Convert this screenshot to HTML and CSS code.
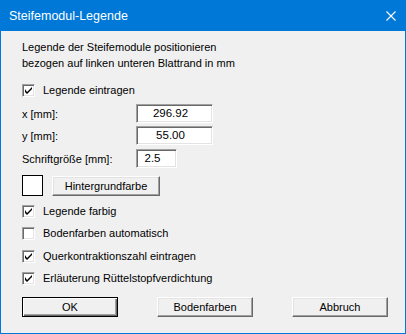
FILE: index.html
```html
<!DOCTYPE html>
<html lang="de">
<head>
<meta charset="utf-8">
<title>Steifemodul-Legende</title>
<link rel="stylesheet" href="styles.css">
</head>
<body>
<div class="dialog">
  <div class="titlebar">
    <span class="title">Steifemodul-Legende</span>
    <svg class="close" width="10" height="10" viewBox="0 0 10 10"><path d="M0.5 0.5 L9.5 9.5 M9.5 0.5 L0.5 9.5" stroke="#fff" stroke-width="1.1" fill="none"/></svg>
  </div>
  <div class="content">
    <div class="intro">
      <div class="line">Legende der Steifemodule positionieren</div>
      <div class="line">bezogen auf linken unteren Blattrand in mm</div>
    </div>
    <label class="check r-eintragen"><span class="box checked"><svg width="7" height="7" viewBox="0 0 7 7"><path d="M0 2 L0 5 L2 7 L7 2 L7 0 L2 5 Z" fill="#000"/></svg></span><span>Legende eintragen</span></label>
    <div class="field r-x"><span class="flabel">x [mm]:</span><span class="input wide">296.92</span></div>
    <div class="field r-y"><span class="flabel">y [mm]:</span><span class="input wide">55.00</span></div>
    <div class="field r-s"><span class="flabel">Schriftgröße [mm]:</span><span class="input narrow">2.5</span></div>
    <div class="swatchrow"><span class="swatch"></span><span class="btn hg">Hintergrundfarbe</span></div>
    <label class="check r-c1"><span class="box checked"><svg width="7" height="7" viewBox="0 0 7 7"><path d="M0 2 L0 5 L2 7 L7 2 L7 0 L2 5 Z" fill="#000"/></svg></span><span>Legende farbig</span></label>
    <label class="check r-c2"><span class="box"></span><span>Bodenfarben automatisch</span></label>
    <label class="check r-c3"><span class="box checked"><svg width="7" height="7" viewBox="0 0 7 7"><path d="M0 2 L0 5 L2 7 L7 2 L7 0 L2 5 Z" fill="#000"/></svg></span><span>Querkontraktionszahl eintragen</span></label>
    <label class="check r-c4"><span class="box checked"><svg width="7" height="7" viewBox="0 0 7 7"><path d="M0 2 L0 5 L2 7 L7 2 L7 0 L2 5 Z" fill="#000"/></svg></span><span>Erläuterung Rüttelstopfverdichtung</span></label>
    <div class="buttons">
      <span class="btn default">OK</span>
      <span class="btn">Bodenfarben</span>
      <span class="btn">Abbruch</span>
    </div>
  </div>
</div>
</body>
</html>
```
FILE: styles.css
```css
html, body {
  margin: 0;
  padding: 0;
  background: #f0f0f0;
}
.dialog {
  width: 406px;
  height: 334px;
  box-sizing: border-box;
  border: 1px solid #0078d7;
  border-top: none;
  background: #f0f0f0;
  font-family: "Liberation Sans", Arial, sans-serif;
  font-size: 11px;
  color: #000;
  display: flex;
  flex-direction: column;
}
.titlebar {
  height: 31px;
  background: #0078d7;
  margin: 0 -1px;
  display: flex;
  align-items: center;
  justify-content: space-between;
  padding: 0 10px 0 9px;
}
.title {
  color: #fff;
  font-family: "Liberation Sans", Arial, sans-serif;
  font-size: 12.5px;
  margin-top: 1px;
}
.close {
  display: block;
  margin-top: 0;
}
.content {
  padding: 8px 17px 0 21px;
  display: flex;
  flex-direction: column;
}
.line {
  height: 16px;
  line-height: 16px;
}
.check {
  display: flex;
  align-items: center;
  height: 16px;
  gap: 8px;
}
.box {
  width: 13px;
  height: 13px;
  box-sizing: border-box;
  background: #fff;
  border-top: 1px solid #a0a0a0;
  border-left: 1px solid #a0a0a0;
  border-right: 1px solid #fff;
  border-bottom: 1px solid #fff;
  box-shadow: inset 1px 1px 0 #696969, inset -1px -1px 0 #e3e3e3;
  display: flex;
  align-items: center;
  justify-content: center;
  flex: none;
}
.box svg {
  display: block;
}
.r-eintragen { margin-top: 11px; }
.field {
  display: flex;
  align-items: center;
  height: 19px;
}
.r-x { margin-top: 6px; }
.r-y { margin-top: 3px; }
.r-s { margin-top: 4px; }
.flabel {
  width: 114px;
  flex: none;
}
.input {
  height: 19px;
  box-sizing: border-box;
  background: #fff;
  border-top: 1px solid #a0a0a0;
  border-left: 1px solid #a0a0a0;
  border-right: 1px solid #fff;
  border-bottom: 1px solid #fff;
  box-shadow: inset 1px 1px 0 #696969, inset -1px -1px 0 #e3e3e3;
  line-height: 17px;
  text-align: center;
  padding-right: 8px;
  font-size: 11.5px;
}
.wide { width: 77px; }
.narrow { width: 41px; }
.swatchrow {
  display: flex;
  align-items: center;
  margin-top: 7px;
  height: 21px;
}
.swatch {
  width: 21px;
  height: 21px;
  box-sizing: border-box;
  border: 1px solid #000;
  background: #fff;
  flex: none;
}
.btn {
  display: flex;
  align-items: center;
  justify-content: center;
  box-sizing: border-box;
  background: #f0f0f0;
  border-top: 1px solid #fff;
  border-left: 1px solid #fff;
  border-right: 1px solid #696969;
  border-bottom: 1px solid #696969;
  box-shadow: inset -1px -1px 0 #a0a0a0, inset 1px 1px 0 #e3e3e3;
  height: 20px;
  width: 96px;
}
.hg {
  margin-left: 9px;
  width: 108px;
}
.r-c1 { margin-top: 7px; }
.r-c2 { margin-top: 6px; }
.r-c3 { margin-top: 7px; }
.r-c4 { margin-top: 6px; }
.buttons {
  margin-top: 11px;
  display: flex;
  justify-content: space-between;
}
.btn.default {
  border: 1px solid #000;
  box-shadow: inset 1px 1px 0 #fff, inset -1px -1px 0 #696969, inset -2px -2px 0 #a0a0a0;
}
```
